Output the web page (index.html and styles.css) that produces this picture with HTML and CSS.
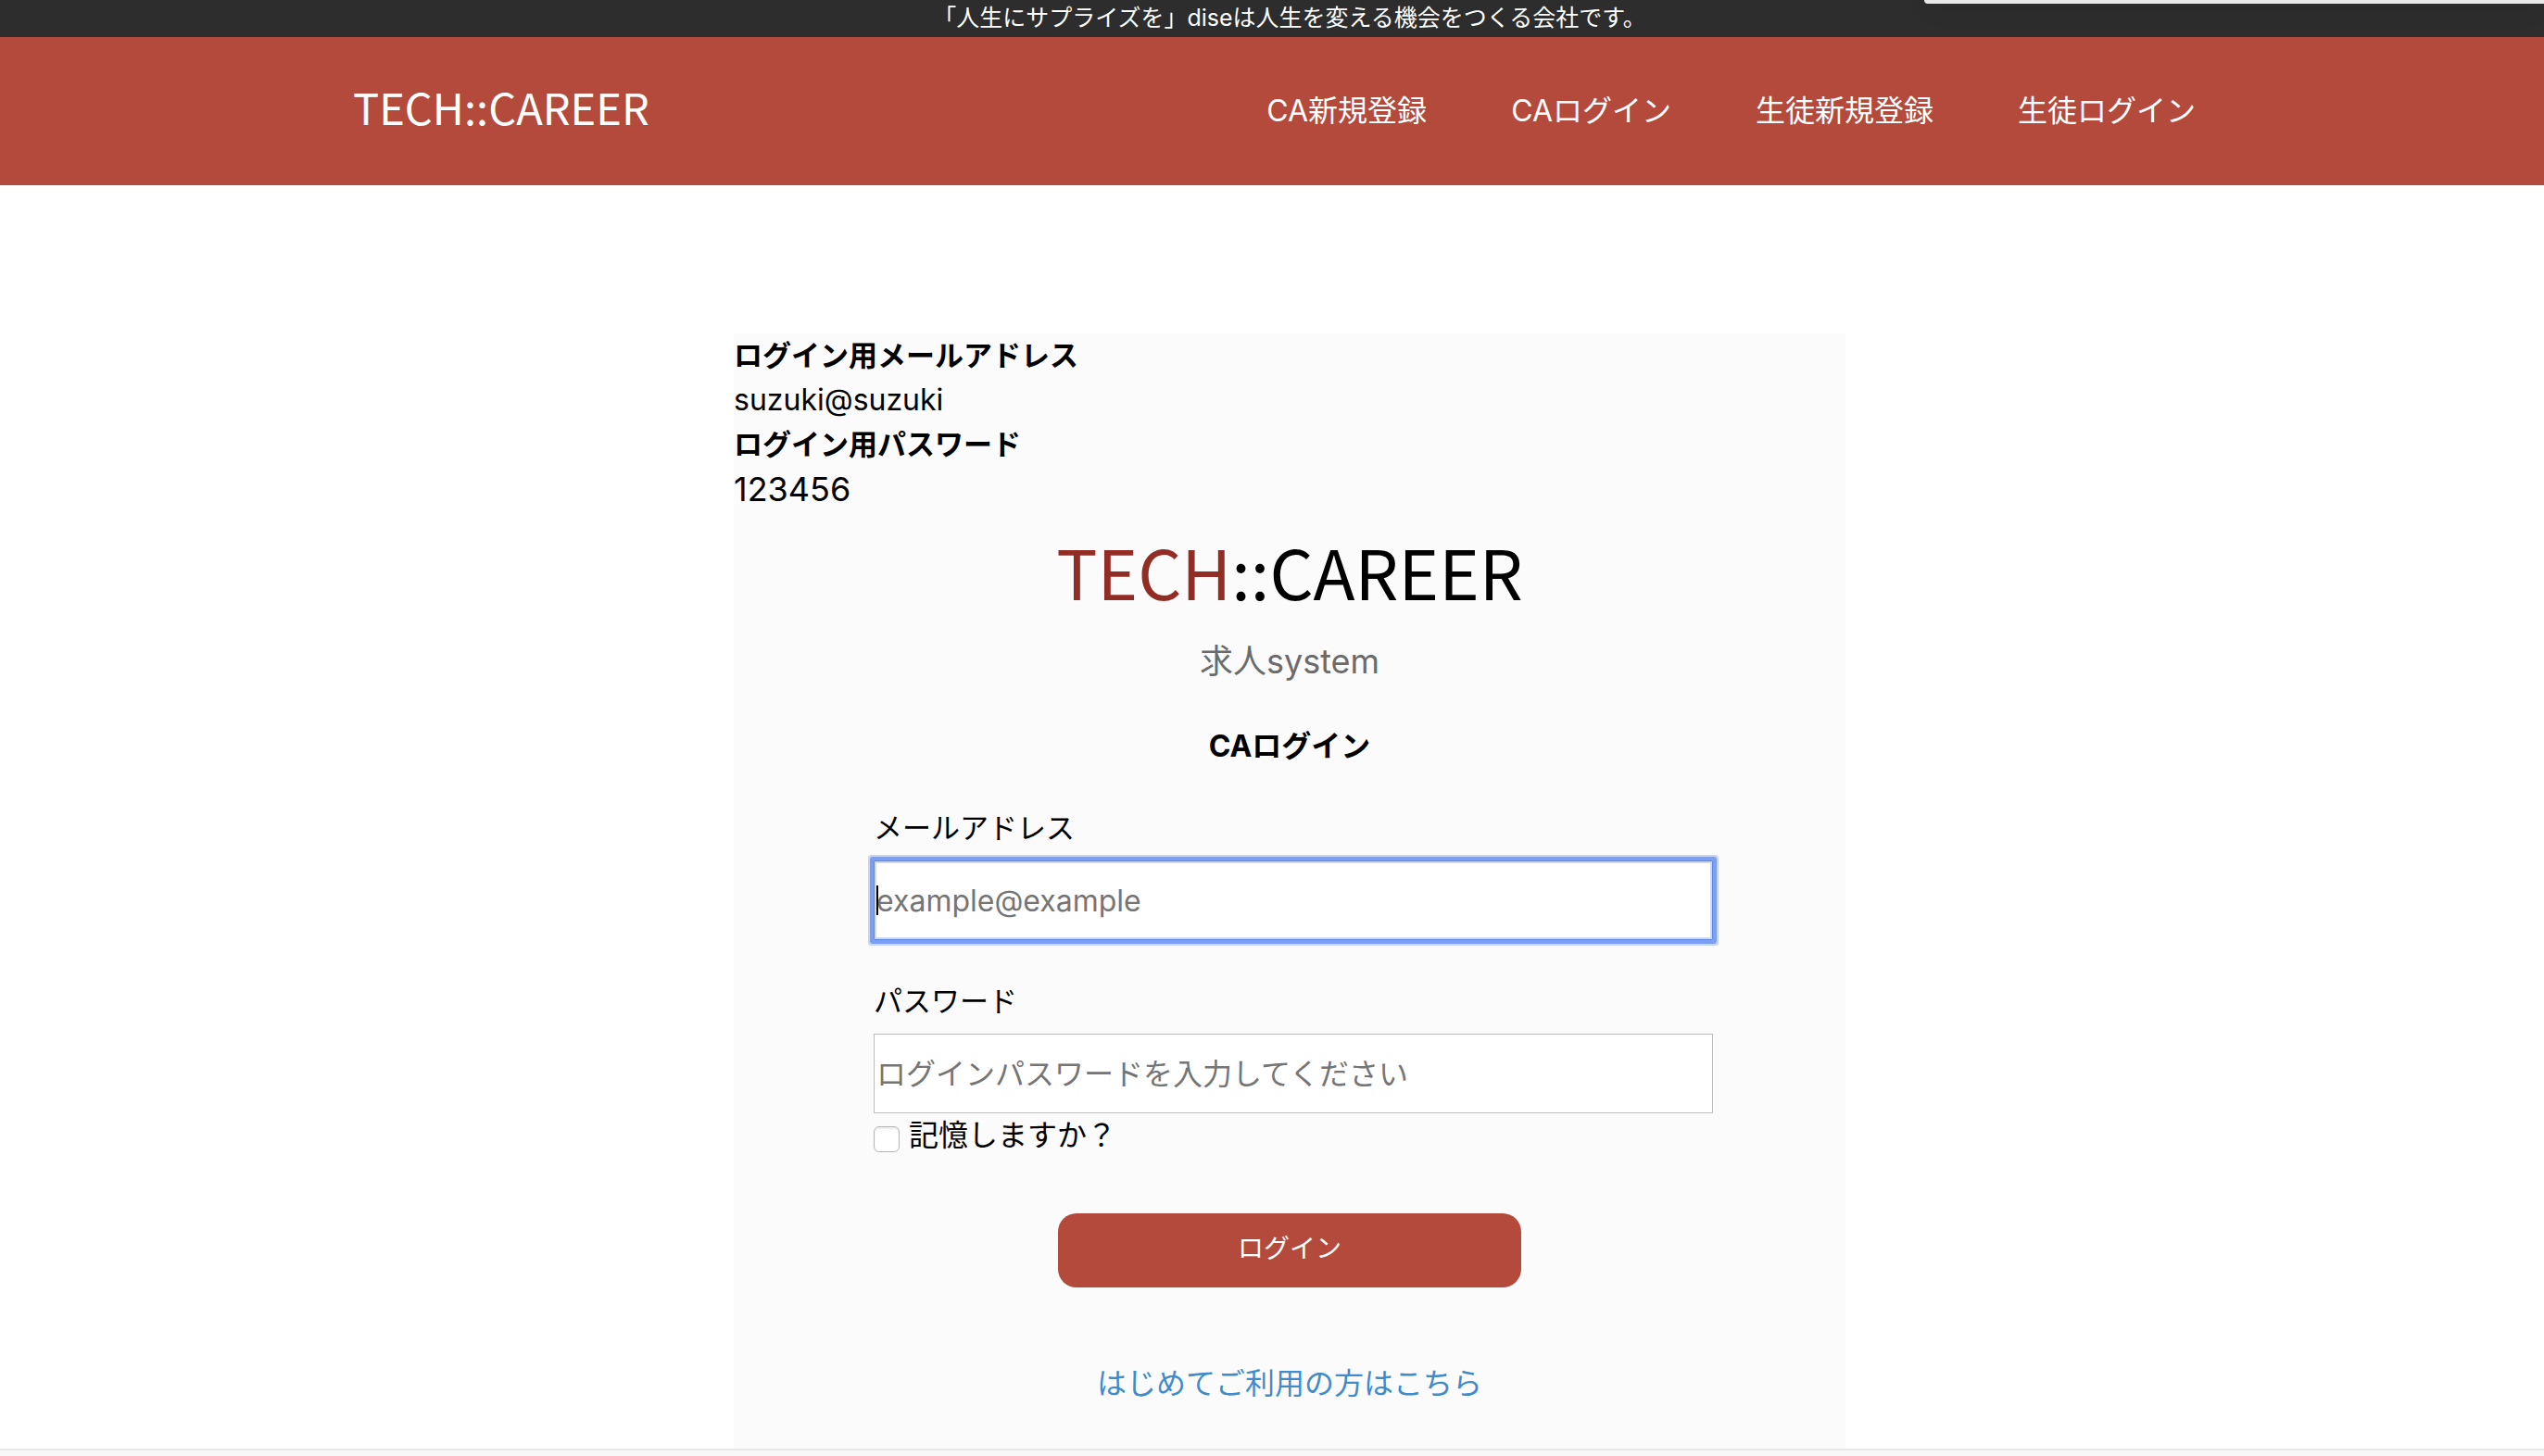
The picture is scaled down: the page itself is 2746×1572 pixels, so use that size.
FILE: index.html
```html
<!DOCTYPE html>
<html lang="ja">
<head>
<meta charset="utf-8">
<title>TECH::CAREER</title>
<link rel="stylesheet" href="styles.css">
</head>
<body>
<div class="float-panel"></div>
<p class="tagline">「人生にサプライズを」diseは人生を変える機会をつくる会社です。</p>
<header class="header">
  <a class="header-logo" href="#">TECH::CAREER</a>
  <nav class="nav">
    <a href="#">CA新規登録</a>
    <a href="#">CAログイン</a>
    <a href="#">生徒新規登録</a>
    <a href="#">生徒ログイン</a>
  </nav>
</header>
<main class="main">
  <section class="card">
    <dl class="account">
      <dt>ログイン用メールアドレス</dt>
      <dd>suzuki@suzuki</dd>
      <dt>ログイン用パスワード</dt>
      <dd class="account-digits">123456</dd>
    </dl>
    <h1 class="brand"><span class="brand-accent">TECH</span>::CAREER</h1>
    <p class="subtitle">求人system</p>
    <h2 class="title">CAログイン</h2>
    <form class="form">
      <label class="label" for="email">メールアドレス</label>
      <div class="field">
        <input class="input input-active" id="email" type="email" placeholder="example@example">
        <span class="caret"></span>
      </div>
      <label class="label" for="password">パスワード</label>
      <input class="input" id="password" type="password" placeholder="ログインパスワードを入力してください">
      <div class="remember">
        <input class="checkbox" id="remember" type="checkbox">
        <label for="remember">記憶しますか？</label>
      </div>
      <button class="submit" type="submit">ログイン</button>
    </form>
    <a class="signup" href="#">はじめてご利用の方はこちら</a>
  </section>
</main>
<footer class="footer"></footer>
</body>
</html>
```
FILE: styles.css
```css
* {
  box-sizing: border-box;
}

body {
  margin: 0;
  background: #fff;
  color: #000;
  font-family: Inter, "Noto Sans CJK JP", sans-serif;
  font-size: 32px;
  line-height: 48px;
}

a {
  color: inherit;
  text-decoration: none;
}

.float-panel {
  position: absolute;
  top: 0;
  right: 0;
  width: 669px;
  height: 4px;
  background: #e8e8e8;
  border-bottom-left-radius: 8px;
  box-shadow: 0 4px 24px rgba(0, 0, 0, 0.2);
}

.tagline {
  margin: 0;
  padding: 0 0 2px 38px;
  background: #2d2d2d;
  color: #fff;
  font-size: 25px;
  line-height: 38px;
  text-align: center;
}

.header {
  display: flex;
  align-items: center;
  justify-content: space-between;
  height: 160px;
  padding: 0 376px 0 381px;
  background: #b34a3c;
  color: #fff;
}

.header-logo {
  padding-bottom: 10px;
  font-family: "Noto Sans CJK JP", sans-serif;
  font-size: 47px;
}

.nav {
  display: flex;
  gap: 91px;
}

.main {
  display: flex;
  justify-content: center;
  padding: 160px 0 0 38px;
}

.card {
  display: flex;
  flex-direction: column;
  align-items: center;
  width: 1200px;
  padding-bottom: 46px;
  background: #fbfbfb;
}

.account {
  align-self: stretch;
  margin: 0;
}

.account dt {
  font-size: 31px;
  font-weight: 700;
}

.account dd {
  margin: 0;
}

.account .account-digits {
  font-size: 36px;
}

.brand {
  margin: 16px 0 0;
  font-family: "Noto Sans CJK JP", sans-serif;
  font-size: 74px;
  font-weight: 400;
  line-height: 96px;
}

.brand-accent {
  color: #942c26;
}

.subtitle {
  margin: 26px 0 0;
  color: #6b6b6b;
  font-size: 36px;
}

.title {
  margin: 44px 0 0;
  font-size: 32px;
}

.form {
  display: flex;
  flex-direction: column;
  width: 906px;
  margin: 40px 0 0 8px;
}

.label {
  font-size: 31px;
}

.field {
  position: relative;
  display: flex;
  margin-bottom: 42px;
}

.input {
  width: 100%;
  height: 86px;
  margin-top: 11px;
  padding: 0 2px;
  border: 1px solid #bdbdbd;
  border-radius: 0;
  background: #fff;
  font: inherit;
  outline: none;
}

.input::placeholder {
  color: #757575;
  opacity: 1;
}

.input-active {
  border-color: #5f86e0;
  border-radius: 1px;
  box-shadow: 0 0 0 4px #7a9ff3, 0 0 0 6px #c6d5fa, inset 0 0 0 2px #cbd8f9;
}

.caret {
  position: absolute;
  top: 38px;
  left: 3px;
  width: 2px;
  height: 32px;
  background: #000;
}

.remember {
  display: flex;
  align-items: center;
  gap: 10px;
}

.checkbox {
  appearance: none;
  width: 28px;
  height: 28px;
  margin: 8px 0 0;
  border: 1px solid #b5b5b5;
  border-radius: 6px;
  background: #fff;
  box-shadow: inset 0 2px 2px #ededed;
}

.submit {
  align-self: center;
  width: 500px;
  height: 80px;
  margin: 60px 8px 0 0;
  padding: 0 0 4px;
  border: 0;
  border-radius: 20px;
  background: #b34a3c;
  color: #fff;
  font: inherit;
  font-size: 28px;
}

.signup {
  margin-top: 80px;
  color: #428bca;
}

.footer {
  height: 8px;
  border-top: 2px solid #e7e7e7;
  background: #f8f8f8;
}
```
